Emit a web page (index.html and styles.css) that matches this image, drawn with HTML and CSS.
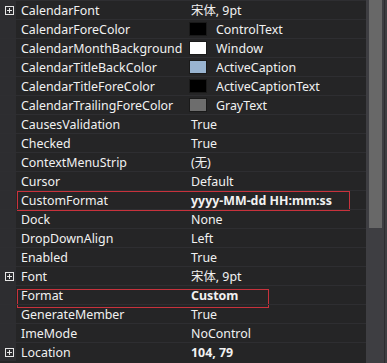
FILE: index.html
```html
<!DOCTYPE html>
<html>
<head>
<meta charset="utf-8">
<link rel="stylesheet" href="styles.css">
</head>
<body>
<div class="panel">
  <div class="grid">
    <div class="row"><div class="gutter"><span class="plus"></span></div><div class="name">CalendarFont</div><div class="value">宋体, 9pt</div></div>
    <div class="row"><div class="gutter"></div><div class="name">CalendarForeColor</div><div class="value"><span class="sw sw-black"></span>ControlText</div></div>
    <div class="row"><div class="gutter"></div><div class="name">CalendarMonthBackground</div><div class="value"><span class="sw sw-white"></span>Window</div></div>
    <div class="row"><div class="gutter"></div><div class="name">CalendarTitleBackColor</div><div class="value"><span class="sw sw-blue"></span>ActiveCaption</div></div>
    <div class="row"><div class="gutter"></div><div class="name">CalendarTitleForeColor</div><div class="value"><span class="sw sw-black"></span>ActiveCaptionText</div></div>
    <div class="row"><div class="gutter"></div><div class="name">CalendarTrailingForeColor</div><div class="value"><span class="sw sw-gray"></span>GrayText</div></div>
    <div class="row"><div class="gutter"></div><div class="name">CausesValidation</div><div class="value">True</div></div>
    <div class="row"><div class="gutter"></div><div class="name">Checked</div><div class="value">True</div></div>
    <div class="row"><div class="gutter"></div><div class="name">ContextMenuStrip</div><div class="value">(无)</div></div>
    <div class="row"><div class="gutter"></div><div class="name">Cursor</div><div class="value">Default</div></div>
    <div class="row"><div class="gutter"></div><div class="name">CustomFormat</div><div class="value bold">yyyy-MM-dd HH:mm:ss</div><span class="mark mark-wide"></span></div>
    <div class="row"><div class="gutter"></div><div class="name">Dock</div><div class="value">None</div></div>
    <div class="row"><div class="gutter"></div><div class="name">DropDownAlign</div><div class="value">Left</div></div>
    <div class="row"><div class="gutter"></div><div class="name">Enabled</div><div class="value">True</div></div>
    <div class="row"><div class="gutter"><span class="plus"></span></div><div class="name">Font</div><div class="value">宋体, 9pt</div></div>
    <div class="row"><div class="gutter"></div><div class="name">Format</div><div class="value bold">Custom</div><span class="mark mark-short"></span></div>
    <div class="row"><div class="gutter"></div><div class="name">GenerateMember</div><div class="value">True</div></div>
    <div class="row"><div class="gutter"></div><div class="name">ImeMode</div><div class="value">NoControl</div></div>
    <div class="row"><div class="gutter"><span class="plus"></span></div><div class="name">Location</div><div class="value bold">104, 79</div></div>
  </div>
  <div class="scroll"><div class="thumb"></div><div class="edge"></div></div>
</div>
</body>
</html>
```
FILE: styles.css
```css
html, body {
  margin: 0;
  padding: 0;
  background: #252526;
}
body {
  width: 387px;
  height: 363px;
  overflow: hidden;
  font-family: "Noto Sans", "Noto Sans CJK SC", sans-serif;
  font-size: 12.4px;
  color: #f1f1f1;
}
.panel {
  display: flex;
  height: 363px;
}
.grid {
  width: 366px;
  display: flex;
  flex-direction: column;
}
.row {
  position: relative;
  display: flex;
  height: 18px;
  border-top: 1px solid #2e2e31;
  line-height: 19px;
  flex: none;
}
.gutter {
  width: 16px;
  flex: none;
  background: #2d2d30;
  display: flex;
  align-items: center;
  justify-content: flex-start;
}
.plus {
  position: relative;
  width: 7px;
  height: 7px;
  margin-left: 5px;
  border: 1px solid #e6e6e6;
}
.plus::before, .plus::after {
  content: "";
  position: absolute;
  background: #e6e6e6;
}
.plus::before { left: 1px; top: 3px; width: 5px; height: 1px; }
.plus::after { left: 3px; top: 1px; width: 1px; height: 5px; }
.name {
  width: 171px;
  flex: none;
  padding-left: 5px;
  box-sizing: border-box;
  white-space: nowrap;
  overflow: hidden;
}
.value {
  flex: 1;
  padding-left: 4px;
  display: flex;
  align-items: center;
  white-space: nowrap;
}
.bold { font-weight: bold; }
.sw {
  width: 18px;
  height: 14px;
  margin-left: -2px;
  margin-right: 9px;
  border: 1px solid #1a1a1a;
  box-sizing: border-box;
  flex: none;
}
.sw-black { background: #000000; }
.sw-white { background: #ffffff; }
.sw-blue { background: #99b4d1; }
.sw-gray { background: #6d6d6d; }
.mark {
  position: absolute;
  left: 17px;
  border: 1px solid #c8323c;
  box-sizing: border-box;
}
.mark-wide { top: 0; width: 333px; height: 20px; }
.mark-short { top: 3px; width: 252px; height: 19px; }
.scroll {
  width: 21px;
  flex: none;
  background: #3e3e42;
  position: relative;
}
.thumb {
  position: absolute;
  left: 3px;
  top: 0;
  width: 13px;
  height: 228px;
  background: #686868;
}
.edge {
  position: absolute;
  left: 18px;
  top: 0;
  width: 1px;
  height: 363px;
  background: #2d2d30;
}
```
